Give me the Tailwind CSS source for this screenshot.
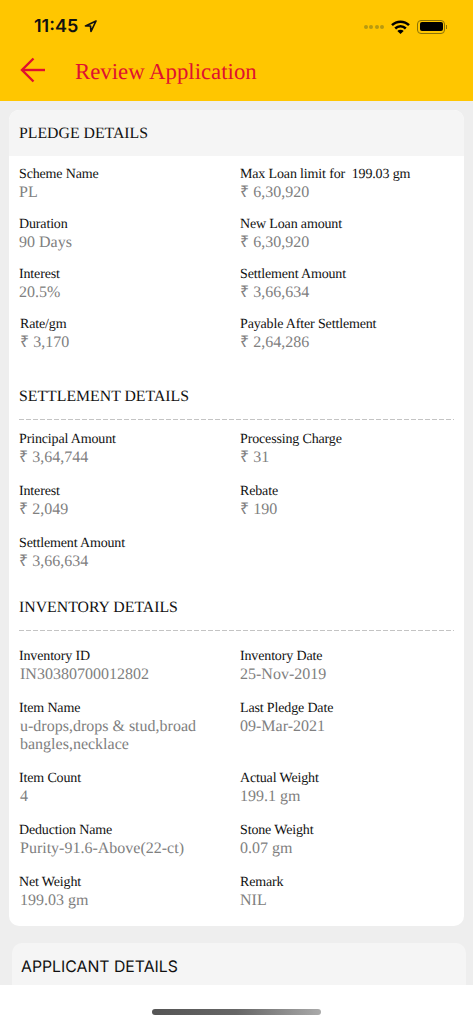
<!DOCTYPE html>
<html lang="en">
<head>
    <meta charset="UTF-8">
    <meta name="viewport" content="width=device-width, initial-scale=1.0">
    <title>Review Application</title>
    <script src="https://cdn.jsdelivr.net/npm/@tailwindcss/browser@4"></script>
</head>
<body class="bg-white font-['Liberation_Serif',serif] [text-rendering:geometricPrecision]">
    <div class="flex h-[1024px] w-[473px] flex-col overflow-hidden">
        <!-- Header -->
        <header class="h-[101px] shrink-0 bg-[#ffc600]">
            <div class="flex h-[53px] items-center justify-between pl-[34px] pr-[26px]">
                <div class="flex items-center gap-[6px] font-['Inter',sans-serif] text-[18px] font-semibold text-[#111]">
                    <span>11:45</span>
                    <svg class="h-[13px] w-[13px]" viewBox="0 0 13 13" fill="none" stroke="#111" stroke-width="1.7" stroke-linejoin="round"><path d="M12 1 1.5 6h5l.5 5.500z"/></svg>
                </div>
                <div class="flex items-center">
                    <div class="flex gap-[1.500px]">
                        <span class="h-[4px] w-[4px] rounded-full bg-[#b89a10]"></span>
                        <span class="h-[4px] w-[4px] rounded-full bg-[#b89a10]"></span>
                        <span class="h-[4px] w-[4px] rounded-full bg-[#b89a10]"></span>
                        <span class="h-[4px] w-[4px] rounded-full bg-[#b89a10]"></span>
                    </div>
                    <svg class="ml-[7px] h-[14px] w-[19px]" viewBox="0 0 19 14" fill="none" stroke="#000" stroke-width="2.500"><path d="M1 5.200a12 12 0 0 1 17 0"/><path d="M4.200 8.500a7.500 7.500 0 0 1 10.600 0"/><path d="M9.500 14 6.300 11a4.500 4.500 0 0 1 6.400 0z" fill="#000" stroke="none"/></svg>
                    <div class="ml-[7px] flex items-center">
                        <div class="flex h-[14px] w-[28px] items-center rounded-[4px] border border-[#8a7208] p-[1.500px]">
                            <div class="h-full w-full rounded-[2px] bg-black"></div>
                        </div>
                        <div class="ml-[1px] h-[4px] w-[1px] bg-[#8a7208]"></div>
                    </div>
                </div>
            </div>
            <div class="flex items-start pl-[20px] pt-[4px]">
                <svg class="mt-[-0.500px] h-[26px] w-[25px]" viewBox="0 0 25 26" fill="none" stroke="#e0102f" stroke-width="2.400"><path d="M25 13H2"/><path d="M13.500 1.500 2 13l11.500 11.500"/></svg>
                <h1 class="ml-[30px] text-[22.800px] leading-[30px] text-[#e0102f]">Review Application</h1>
            </div>
        </header>

        <!-- Scrolling content -->
        <main class="min-h-0 flex-1 overflow-hidden bg-[#eeeeee] pt-[9px]">
            <section class="ml-[9px] w-[455px] overflow-hidden rounded-[10px] bg-white pb-[16px]">
                <h2 class="flex h-[46px] items-center bg-[#f5f5f5] pl-[10px] pt-[2px] text-[15.800px] text-[#111]">PLEDGE DETAILS</h2>
                <div class="grid grid-cols-[221px_1fr] gap-y-[14px] pl-[10px] pt-[10px] text-[14px] leading-[18px] tracking-[-0.15px] text-[#111]">
                    <div><p>Scheme Name</p><p class="text-[16px] tracking-normal text-[#808080]">PL</p></div>
                    <div><p>Max Loan limit for&nbsp; 199.03 gm</p><p class="text-[16px] tracking-normal text-[#808080]">₹ 6,30,920</p></div>
                    <div><p>Duration</p><p class="text-[16px] tracking-normal text-[#808080]">90 Days</p></div>
                    <div><p>New Loan amount</p><p class="text-[16px] tracking-normal text-[#808080]">₹ 6,30,920</p></div>
                    <div><p>Interest</p><p class="text-[16px] tracking-normal text-[#808080]">20.5%</p></div>
                    <div><p>Settlement Amount</p><p class="text-[16px] tracking-normal text-[#808080]">₹ 3,66,634</p></div>
                    <div class="pl-[1px]"><p>Rate/gm</p><p class="text-[16px] tracking-normal text-[#808080]">₹ 3,170</p></div>
                    <div><p>Payable After Settlement</p><p class="text-[16px] tracking-normal text-[#808080]">₹ 2,64,286</p></div>
                </div>

                <h2 class="mt-[35px] pl-[10px] text-[15.800px] leading-[20px] text-[#111]">SETTLEMENT DETAILS</h2>
                <div class="ml-[10px] mt-[12px] h-px w-[435px] bg-[repeating-linear-gradient(to_right,#c4c4c4_0,#c4c4c4_5px,transparent_5px,transparent_7px)]"></div>
                <div class="grid grid-cols-[221px_1fr] gap-y-[16px] pl-[10px] pt-[11px] text-[14px] leading-[18px] tracking-[-0.15px] text-[#111]">
                    <div><p>Principal Amount</p><p class="text-[16px] tracking-normal text-[#808080]">₹ 3,64,744</p></div>
                    <div><p>Processing Charge</p><p class="text-[16px] tracking-normal text-[#808080]">₹ 31</p></div>
                    <div><p>Interest</p><p class="text-[16px] tracking-normal text-[#808080]">₹ 2,049</p></div>
                    <div><p>Rebate</p><p class="text-[16px] tracking-normal text-[#808080]">₹ 190</p></div>
                    <div><p>Settlement Amount</p><p class="text-[16px] tracking-normal text-[#808080]">₹ 3,66,634</p></div>
                </div>

                <h2 class="mt-[27px] pl-[10px] text-[15.800px] leading-[20px] text-[#111]">INVENTORY DETAILS</h2>
                <div class="ml-[10px] mt-[12px] h-px w-[435px] bg-[repeating-linear-gradient(to_right,#c4c4c4_0,#c4c4c4_5px,transparent_5px,transparent_7px)]"></div>
                <div class="grid grid-cols-[221px_1fr] gap-y-[16px] pl-[10px] pt-[17px] text-[14px] leading-[18px] tracking-[-0.15px] text-[#111]">
                    <div><p>Inventory ID</p><p class="pl-[1px] text-[16px] tracking-normal text-[#808080]">IN30380700012802</p></div>
                    <div><p>Inventory Date</p><p class="text-[16px] tracking-normal text-[#808080]">25-Nov-2019</p></div>
                    <div><p>Item Name</p><p class="w-[195px] pl-[1px] text-[16px] tracking-normal text-[#808080]">u-drops,drops &amp; stud,broad bangles,necklace</p></div>
                    <div><p>Last Pledge Date</p><p class="text-[16px] tracking-normal text-[#808080]">09-Mar-2021</p></div>
                    <div><p>Item Count</p><p class="pl-[1px] text-[16px] tracking-normal text-[#808080]">4</p></div>
                    <div><p>Actual Weight</p><p class="text-[16px] tracking-normal text-[#808080]">199.1 gm</p></div>
                    <div><p>Deduction Name</p><p class="pl-[1px] text-[16px] tracking-normal text-[#808080]">Purity-91.6-Above(22-ct)</p></div>
                    <div><p>Stone Weight</p><p class="text-[16px] tracking-normal text-[#808080]">0.07 gm</p></div>
                    <div><p>Net Weight</p><p class="pl-[1px] text-[16px] tracking-normal text-[#808080]">199.03 gm</p></div>
                    <div><p>Remark</p><p class="text-[16px] tracking-normal text-[#808080]">NIL</p></div>
                </div>
            </section>

            <section class="ml-[12px] mt-[17px] h-[80px] w-[454px] rounded-t-[10px] bg-[#f5f5f5] pl-[9px] pt-[14px]">
                <h2 class="font-['Inter',sans-serif] text-[15.800px] leading-[20px] text-[#111]">APPLICANT DETAILS</h2>
            </section>
        </main>

        <!-- Home indicator -->
        <div class="flex h-[39px] shrink-0 justify-center bg-white pt-[24px]">
            <div class="h-[6px] w-[169px] rounded-full bg-gradient-to-r from-[#555] via-[#666] to-[#aaa]"></div>
        </div>
    </div>
</body>
</html>
